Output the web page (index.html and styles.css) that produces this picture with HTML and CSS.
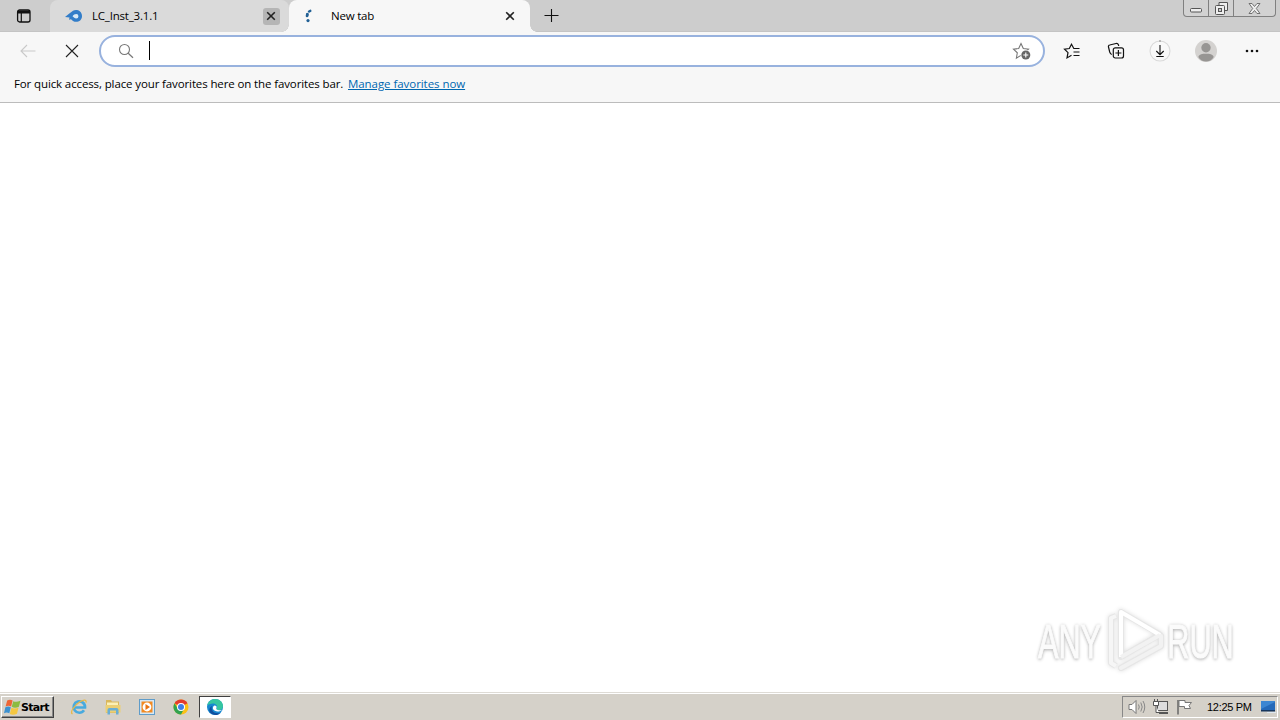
FILE: index.html
```html
<!DOCTYPE html>
<html lang="en">
<head>
  <meta charset="UTF-8">
  <title>New tab</title>
  <link rel="stylesheet" href="styles.css">
</head>
<body>

  <header class="tab-strip">
    <div class="tab-actions">
      <svg width="16" height="16" viewBox="0 0 16 16"><rect x="1.6" y="2" width="12.4" height="12" rx="2" fill="none" stroke="#111" stroke-width="1.3"/><path d="M1.500 2.500h12.500v3H1.500z" fill="#111"/><path d="M5.300 5v9" stroke="#111" stroke-width="1.2"/></svg>
    </div>
    <div class="tab tab-inactive">
      <svg class="tab-icon" width="18" height="14" viewBox="0 0 18 14"><path d="M0 8 4 4.800 8 1.800C11-.2 17 1.500 17 7c0 5.500-5.500 7-9 5L6 10.300l-2 .5.500-2.300z" fill="#327dc9"/><path d="M7.500 7.200c1-1.600 2.300-2.300 3.700-2.300a2.200 2.200 0 0 1 0 4.500C9.700 9.400 8.700 8 7.500 7.200z" fill="#d8e9f6"/></svg>
      <span class="tab-title">LC_Inst_3.1.1</span>
      <button class="tab-close" type="button"><svg width="10" height="10" viewBox="0 0 10 10"><path d="M1.200 1.200l7.600 7.600M8.800 1.200L1.200 8.800" stroke="#222" stroke-width="1.600"/></svg></button>
    </div>
    <div class="tab tab-active">
      <svg class="tab-icon" width="18" height="14" viewBox="0 0 18 14"><path d="M7.300 1.800C5.300 2.500 4.200 4.500 4.200 7" fill="none" stroke="#216095" stroke-width="2.400" stroke-linecap="round" stroke-dasharray="1.500 3"/><path d="M4.300 5.200 4 7" stroke="#216095" stroke-width="2.600" stroke-linecap="round"/><circle cx="5" cy="11.600" r="1.600" fill="#216095"/></svg>
      <span class="tab-title">New tab</span>
      <button class="tab-close" type="button"><svg width="10" height="10" viewBox="0 0 10 10"><path d="M1.200 1.200l7.600 7.600M8.800 1.200L1.200 8.800" stroke="#222" stroke-width="1.600"/></svg></button>
    </div>
    <button class="new-tab" type="button"><svg width="15" height="15" viewBox="0 0 15 15"><path d="M7.500 1v13M.5 7.500h14" stroke="#111" stroke-width="1.100"/></svg></button>
    <div class="window-controls">
      <span class="control"><svg width="12" height="5" viewBox="0 0 12 5"><rect x=".5" y=".5" width="11" height="3.500" rx="1" fill="#eee" stroke="#555"/></svg></span>
      <span class="control"><svg width="13" height="13" viewBox="0 0 13 13"><path d="M4 3V.5h8.500v8H10" fill="#eee" stroke="#555"/><rect x=".5" y="3.500" width="9" height="9" rx="1" fill="#eee" stroke="#555"/><rect x="3.500" y="6.500" width="3" height="3" fill="#ccc" stroke="#555"/></svg></span>
      <span class="control control-close"><svg width="13" height="11" viewBox="0 0 13 11"><path d="M1 .5h3l2.500 3 2.500-3h3L8.300 5.500 12 10.500H9l-2.500-3-2.500 3H1l3.700-5z" fill="#eee" stroke="#666" stroke-width=".9"/></svg></span>
    </div>
  </header>

  <nav class="toolbar">
    <svg class="back" width="18" height="16" viewBox="0 0 18 16"><path d="M16.500 8H2M8 2 2 8l6 6" fill="none" stroke="#c9c9c9" stroke-width="1.100"/></svg>
    <svg class="stop" width="14" height="14" viewBox="0 0 14 14"><path d="M1 1l12 12M13 1 1 13" stroke="#222" stroke-width="1.100"/></svg>
    <div class="address-bar">
      <svg class="search" width="16" height="16" viewBox="0 0 16 16"><circle cx="6.500" cy="6.500" r="5" fill="none" stroke="#777" stroke-width="1.100"/><path d="M10.200 10.200l4.800 4.600" stroke="#777" stroke-width="1.200"/></svg>
      <span class="caret"></span>
      <svg class="add-favorite" width="20" height="20" viewBox="0 0 20 20"><path d="M9 2.500l2.300 5 5.200.6-3.800 3.700.9 5.300L9 14.400l-4.600 2.700.9-5.300-3.800-3.700 5.200-.6z" fill="none" stroke="#777" stroke-width="1.100"/><circle cx="13.800" cy="14" r="5.200" fill="#fff"/><circle cx="13.800" cy="14" r="4.500" fill="#666"/><path d="M13.800 11.500v5M11.300 14h5" stroke="#fff" stroke-width="1.100"/></svg>
    </div>
    <div class="toolbar-actions">
      <svg width="18" height="18" viewBox="0 0 18 18"><path d="M16.500 6.500h-5.700L8.500 2.200 6.300 6.500l-4.800.7L5 10.700l-1 5.200 4.500-2.600" fill="none" stroke="#111" stroke-width="1.200"/><path d="M10.500 10h6M10.500 13.500h6" stroke="#111" stroke-width="1.200"/></svg>
      <svg width="18" height="18" viewBox="0 0 18 18"><path d="M4.800 12.500C3.300 12 3 11 2.700 10L1.500 5c-.3-1 .2-1.800 1.200-2L9 1.500c1.300-.3 2 .2 2.500 1.500l.2 1" fill="none" stroke="#111" stroke-width="1.200"/><rect x="6.300" y="5.800" width="10.200" height="10.200" rx="2" fill="none" stroke="#111" stroke-width="1.200"/><path d="M11.400 8v6M8.400 11h6" stroke="#111" stroke-width="1.200"/></svg>
      <svg width="22" height="22" viewBox="0 0 22 22"><circle cx="11" cy="11" r="10" fill="#f9f9f9" stroke="#dadada" stroke-width="1.100"/><path d="M10.500 1h1" stroke="#333"/><path d="M11 5v9.500M7.300 11l3.700 3.700 3.700-3.700M7.300 16.500h7.400" fill="none" stroke="#111" stroke-width="1.100"/></svg>
      <svg class="profile" width="22" height="22" viewBox="0 0 22 22"><circle cx="11" cy="11" r="11" fill="#d4d2d0"/><circle cx="11" cy="7.800" r="4.700" fill="#979593"/><path d="M3.300 17c1-3 4-3.300 7.700-3.300s6.700.3 7.700 3.300c-1.600 3-4.600 4.600-7.700 4.600S4.900 20 3.300 17z" fill="#979593"/></svg>
      <svg class="more" width="16" height="4" viewBox="0 0 16 4"><g fill="#111"><circle cx="3" cy="2" r="1.300"/><circle cx="8" cy="2" r="1.300"/><circle cx="13" cy="2" r="1.300"/></g></svg>
    </div>
  </nav>

  <div class="favorites-bar">
    <span class="favorites-text">For quick access, place your favorites here on the favorites bar.</span>
    <a class="favorites-link" href="#">Manage favorites now</a>
  </div>

  <main class="page">
    <div class="watermark">
      <span class="watermark-text">ANY</span>
      <svg width="60" height="66" viewBox="0 0 60 66"><g fill="none" stroke-linejoin="round"><path d="M11 9 6 11v45l5 3M16 5v45l39-22.500z" stroke="#e6e6e6" stroke-width="6"/><path d="M16 61 56 39V29" stroke="#e6e6e6" stroke-width="6" stroke-linecap="round"/><path d="M11 9 6 11v45l5 3" stroke="#f6f6f6" stroke-width="4"/><path d="M16 61 56 39V29" stroke="#f2f2f2" stroke-width="4" stroke-linecap="round"/><path d="M16 50V5l39 23" stroke="#fff" stroke-width="4"/><path d="M55 28 16 50" stroke="#f2f2f2" stroke-width="4"/></g></svg>
      <span class="watermark-text">RUN</span>
    </div>
  </main>

  <footer class="taskbar">
    <button class="start" type="button">
      <svg width="17" height="17" viewBox="0 0 16 16"><path d="M3 1.500c2-1.300 3.600-1 5.100 0L6.700 7C5 6 3.300 6 1.500 7z" fill="#ed6535"/><path d="M8.700 2c1.800.9 4 .8 6.800-.4L14 7.300c-2.200 1.200-4.800 1.200-6.700.1z" fill="#8cbb40"/><path d="M1.300 7.800c1.800-1 3.500-1 5.100 0L5 13.500c-1.700-1-3.300-1-5 0z" fill="#3c91d0"/><path d="M7 8.300c1.800 1 4.300 1 6.700-.2l-1.500 5.800c-2.400 1.200-4.900 1.200-6.700.2z" fill="#f5c740"/></svg>
      <span class="start-label">Start</span>
    </button>
    <div class="quick-launch">
      <svg width="18" height="18" viewBox="0 0 18 18"><path d="M14 12.300A5.700 5.700 0 1 1 15 9.500H5" fill="none" stroke="#48aade" stroke-width="2.700"/><path d="M2.500 16C-.5 14.500 4 7.500 10 3.800c3.500-2.200 6.800-2.500 6 .8" fill="none" stroke="#e7b849" stroke-width="1.300"/></svg>
      <svg width="18" height="18" viewBox="0 0 18 18"><path d="M2 2h5l1 1.500h7V15H2z" fill="#d9b75c"/><path d="M3 4.500h11v5H3z" fill="#fbf0b6"/><path d="M1.500 7h15V14.500h-15z" fill="#ebcf74"/><path d="M3.500 16.500V12q0-2 2-2h7q2 0 2 2v4.500h-2.500v-4H6v4z" fill="#69aed4"/></svg>
      <svg width="18" height="18" viewBox="0 0 18 18"><rect x="1.500" y="1.500" width="15" height="15" fill="#d6e8f5" stroke="#5f9cc9"/><rect x="3.500" y="3.500" width="11" height="11" fill="#f28a22"/><circle cx="9" cy="9" r="4.400" fill="#fff"/><path d="M7.500 6l4.500 3-4.500 3z" fill="#e87312"/></svg>
      <svg width="18" height="18" viewBox="0 0 18 18"><circle cx="9" cy="9" r="7.500" fill="#fbc116"/><path d="M9 9 2.500 5.300a7.500 7.500 0 0 1 13 0z" fill="#e33b2e"/><path d="M2.500 5.250A7.500 7.500 0 0 0 9 16.500L12 11 6 11z" fill="#31a350"/><circle cx="9" cy="9" r="4" fill="#fff"/><circle cx="9" cy="9" r="3" fill="#3f7fe8"/></svg>
      <span class="task-active"><svg width="18" height="18" viewBox="0 0 18 18"><circle cx="9" cy="9" r="8" fill="#1687cf"/><path d="M1.200 7.500C2 3.500 5.500 1 9 1c5 0 8 3.500 8 7 0 3-2.500 4.500-5 4.200-1.500-.2-2-1-1.200-2C12 8 10 5.500 7 5.500c-2.500 0-4.800 1-5.800 2z" fill="#36c6a0"/><path d="M6 8c-1.500 4 2 8.500 8.500 7-3 3-8 2.500-10.500-.5C2.500 12 3.500 9.500 6 8z" fill="#114f9e"/><path d="M8.500 7.500c1.800 0 2.600 1.200 1.900 2.500-.8 1.500 1.500 3 5.600 1.700-1.500 2.300-7.600 2.600-9-.7-.5-1.500.2-3 1.500-3.500z" fill="#fff"/></svg></span>
    </div>
    <div class="tray">
      <svg width="18" height="16" viewBox="0 0 18 16"><path d="M1 5.500h3l4-4v13l-4-4H1z" fill="#fff" stroke="#777"/><path d="M10.500 5.500q1.500 2.500 0 5M12.800 3.500q2.800 4.500 0 9M15 2q3.500 6 0 12" fill="none" stroke="#888"/></svg>
      <svg width="18" height="16" viewBox="0 0 18 16"><rect x="5.500" y="2.500" width="10" height="9" fill="#ddd" stroke="#555"/><path d="M7 14h9" stroke="#555" stroke-width="2"/><path d="M1.500 2.500h5v4h-5zM2.500 0v2M5.500 0v2M4 6.500v7h3" fill="#fff" stroke="#555"/></svg>
      <svg width="18" height="16" viewBox="0 0 18 16"><path d="M2 1v14.500" stroke="#666" stroke-width="1.500"/><path d="M3 1.500h6v2h6.500L13 6.500l1.500 3H8.500v-2H3z" fill="#fff" stroke="#777"/></svg>
      <span class="clock">12:25 PM</span>
      <svg width="17" height="14" viewBox="0 0 17 14"><path d="M1 1h14v9H1z" fill="#2469b9"/><path d="M1 9 15 2V1H1z" fill="#3c86d2"/><path d="M1 10h14v1.500H1z" fill="#16365e"/><path d="M7 12.500h9" stroke="#dfe8f0"/></svg>
    </div>
  </footer>

</body>
</html>
```
FILE: styles.css
```css
* {
    box-sizing: border-box;
}

body {
    margin: 0;
    height: 720px;
    display: flex;
    flex-direction: column;
    overflow: hidden;
    background: #fff;
    color: #000;
    font-family: "Open Sans", "Noto Sans", sans-serif;
    font-size: 11px;
}

svg {
    display: block;
    flex: none;
}

button {
    border: none;
    background: none;
    padding: 0;
    font: inherit;
    color: inherit;
}

.tab-strip {
    display: flex;
    height: 32px;
    background: #cdcdcd;
    border-bottom: 1px solid #c4c4c4;
}

.tab-actions {
    width: 50px;
    padding: 8px 16px;
}

.tab {
    display: flex;
    align-items: center;
    height: 32px;
}

.tab-inactive {
    width: 239px;
    padding: 0 9.5px 0 15px;
    background: #dadada;
    border-radius: 8px 8px 8px 0;
}

.tab-active {
    position: relative;
    width: 241px;
    padding: 0 11px 0 14px;
    background: #f7f7f7;
    border-radius: 8px 8px 0 0;
}

/* curved feet of the selected tab */
.tab-active::before,
.tab-active::after {
    content: "";
    position: absolute;
    bottom: 0;
    width: 7px;
    height: 7px;
}

.tab-active::before {
    left: -7px;
    background: radial-gradient(circle at 0 0, transparent 6.5px, #f7f7f7 7px);
}

.tab-active::after {
    right: -7px;
    background: radial-gradient(circle at 100% 0, transparent 6.5px, #f7f7f7 7px);
}

.tab-title {
    flex: 1;
    margin-left: 9px;
    padding-bottom: 2px;
    font-size: 11.5px;
    letter-spacing: -0.2px;
}

.tab-active .tab-title {
    margin-left: 10px;
}

.tab-close {
    display: flex;
    align-items: center;
    justify-content: center;
    width: 17px;
    height: 17px;
    border-radius: 3px;
}

.tab-inactive .tab-close {
    background: #b5b5b5;
}

.tab-active .tab-close {
    margin-right: 0.5px;
}

.new-tab {
    align-self: flex-start;
    margin: 8px 0 0 14px;
}

.window-controls {
    display: flex;
    align-self: flex-start;
    width: 93px;
    height: 17px;
    margin: 0 4px 0 auto;
    border: 1px solid #808080;
    border-top: none;
    border-radius: 0 0 4px 4px;
    background: #d2d2d2;
}

.control {
    display: flex;
    align-items: center;
    justify-content: center;
    width: 25px;
    border-right: 1px solid #808080;
}

.control:first-child {
    padding-top: 5px;
}

.control-close {
    flex: 1;
    border-right: none;
}

.toolbar {
    display: flex;
    align-items: center;
    height: 38px;
    background: #f7f7f7;
}

.back {
    margin-left: 19px;
}

.stop {
    margin: 0 20px 0 28px;
}

.address-bar {
    display: flex;
    align-items: center;
    width: 946px;
    height: 32px;
    padding: 0 11px 0 17px;
    background: #fff;
    border: 2px solid #98b2de;
    border-radius: 16px;
}

.caret {
    width: 1px;
    height: 19px;
    margin: 0 0 1px 15px;
    background: #000;
}

.add-favorite {
    margin-left: auto;
}

.toolbar-actions {
    display: flex;
    align-items: center;
    margin-left: 18px;
    gap: 26px;
}

.toolbar-actions svg:nth-child(3) {
    margin-left: -2px;
}

.profile {
    margin-left: -2px;
}

.more {
    margin-left: 1px;
}

.favorites-bar {
    display: flex;
    align-items: center;
    height: 33px;
    padding: 0 14px 6px;
    background: #f7f7f7;
    border-bottom: 1px solid #bcbcbc;
    font-size: 11.5px;
    letter-spacing: -0.06px;
    white-space: nowrap;
}

.favorites-text {
    width: 334px;
    letter-spacing: -0.12px;
}

.favorites-link {
    color: #0067b0;
}

.page {
    flex: 1;
    display: flex;
    align-items: flex-end;
    justify-content: flex-end;
    padding: 0 47px 19px 0;
}

.watermark {
    display: flex;
    align-items: center;
    gap: 3px;
}

.watermark svg {
    filter: drop-shadow(0 0 2px #ddd);
}

.watermark-text {
    display: flex;
    justify-content: center;
    width: 65px;
    padding-top: 3px;
    color: #fbfbfb;
    font-family: "Liberation Sans", Arial, sans-serif;
    font-size: 48px;
    line-height: 60px;
    transform: scaleX(0.64);
    -webkit-text-stroke: 1px #fbfbfb;
    text-shadow: 0 0 4px #b5b5b5, 0 2px 4px #c4c4c4;
}

.taskbar {
    display: flex;
    align-items: center;
    height: 28px;
    padding: 1px 2px 0 0;
    background: #d5d1c9;
    border-top: 1px solid #dedbd5;
    box-shadow: inset 0 1px #fff;
}

.start {
    display: flex;
    align-items: center;
    width: 53px;
    height: 22px;
    margin-left: 1px;
    padding-left: 2px;
    border: 1px solid;
    border-color: #fff #404040 #404040 #fff;
    box-shadow: inset -1px -1px #888;
}

.start-label {
    font-family: "DejaVu Sans", sans-serif;
    font-size: 11px;
    font-weight: bold;
    letter-spacing: -0.7px;
}

.quick-launch {
    display: flex;
    align-items: center;
    gap: 16px;
    margin-left: 16px;
}

.task-active {
    display: flex;
    align-items: center;
    justify-content: center;
    width: 32px;
    height: 22px;
    margin-left: -7px;
    background: #fff;
    border: 1px solid;
    border-color: #404040 #fff #fff #404040;
}

.tray {
    display: flex;
    align-items: center;
    width: 156px;
    height: 22px;
    margin-left: auto;
    padding-left: 5px;
    gap: 6px;
    border: 1px solid;
    border-color: #888 #fff #fff #888;
}

.clock {
    width: 47px;
    margin: 0 0 0 7px;
    font-family: "Liberation Sans", sans-serif;
    font-size: 11px;
    letter-spacing: -0.3px;
    white-space: nowrap;
}
```
